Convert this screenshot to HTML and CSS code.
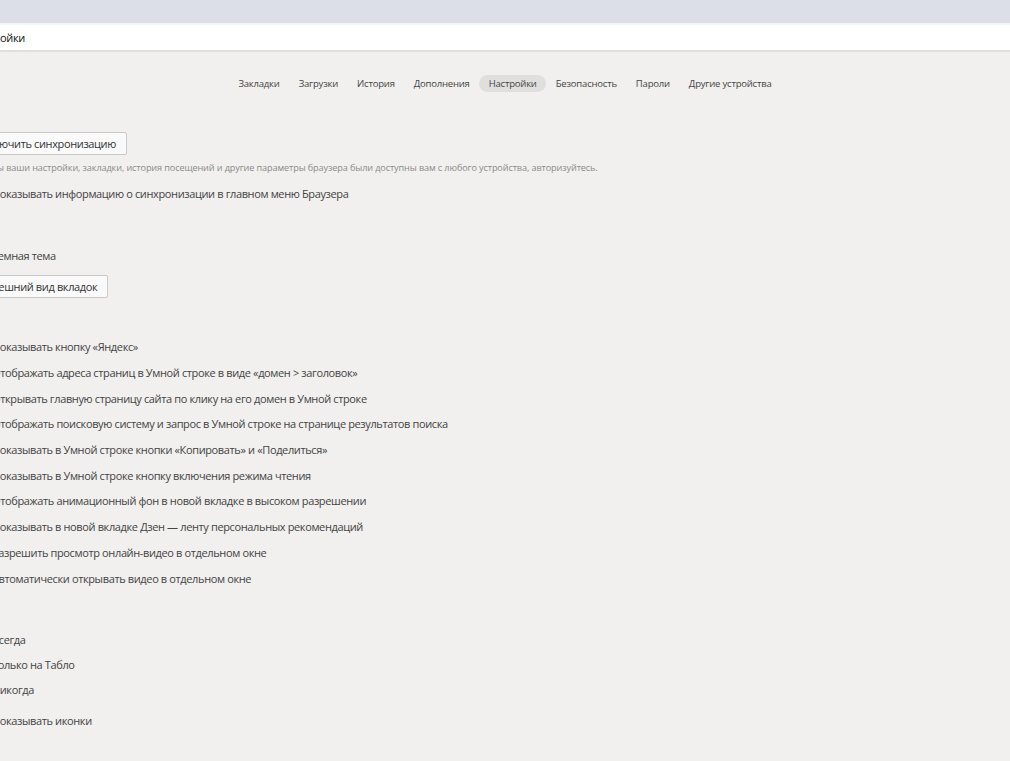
FILE: index.html
```html
<!DOCTYPE html>
<html lang="ru">
<head>
<meta charset="utf-8">
<title>Настройки</title>
<link rel="stylesheet" href="styles.css">
</head>
<body>
<div class="topbar"></div>
<div class="addressbar"><span class="addr-text">Настройки</span></div>
<nav class="tabs">
  <span class="tab">Закладки</span>
  <span class="tab">Загрузки</span>
  <span class="tab">История</span>
  <span class="tab">Дополнения</span>
  <span class="tab active">Настройки</span>
  <span class="tab">Безопасность</span>
  <span class="tab">Пароли</span>
  <span class="tab">Другие устройства</span>
</nav>
<main class="content">
  <button class="btn btn-sync">Включить синхронизацию</button>
  <p class="desc">Чтобы ваши настройки, закладки, история посещений и другие параметры браузера были доступны вам с любого устройства, авторизуйтесь.</p>
  <label class="row row-sync"><span class="box"></span><span>Показывать информацию о синхронизации в главном меню Браузера</span></label>

  <label class="row row-theme"><span class="box"></span><span>Темная тема</span></label>
  <button class="btn btn-tabs">Внешний вид вкладок</button>

  <div class="list">
    <label class="row"><span class="box"></span><span>Показывать кнопку «Яндекс»</span></label>
    <label class="row"><span class="box"></span><span>Отображать адреса страниц в Умной строке в виде «домен &gt; заголовок»</span></label>
    <label class="row"><span class="box"></span><span>Открывать главную страницу сайта по клику на его домен в Умной строке</span></label>
    <label class="row"><span class="box"></span><span>Отображать поисковую систему и запрос в Умной строке на странице результатов поиска</span></label>
    <label class="row"><span class="box"></span><span>Показывать в Умной строке кнопки «Копировать» и «Поделиться»</span></label>
    <label class="row"><span class="box"></span><span>Показывать в Умной строке кнопку включения режима чтения</span></label>
    <label class="row"><span class="box"></span><span>Отображать анимационный фон в новой вкладке в высоком разрешении</span></label>
    <label class="row"><span class="box"></span><span>Показывать в новой вкладке Дзен — ленту персональных рекомендаций</span></label>
    <label class="row"><span class="box"></span><span>Разрешить просмотр онлайн-видео в отдельном окне</span></label>
    <label class="row"><span class="box"></span><span>Автоматически открывать видео в отдельном окне</span></label>
  </div>

  <div class="radios">
    <label class="row"><span class="box round"></span><span>Всегда</span></label>
    <label class="row"><span class="box round"></span><span>Только на Табло</span></label>
    <label class="row"><span class="box round"></span><span>Никогда</span></label>
  </div>
  <label class="row row-icons"><span class="box"></span><span>Показывать иконки</span></label>
</main>
</body>
</html>
```

FILE: styles.css
```css
html, body {
  margin: 0;
  padding: 0;
}
body {
  background: #f1f0ee;
  font-family: "Open Sans", "Noto Sans", sans-serif;
  color: #434343;
  overflow: hidden;
  width: 1010px;
  height: 761px;
}
.topbar {
  height: 23px;
  background: #dcdfe7;
}
.addressbar {
  height: 25px;
  background: #ffffff;
  border-top: 2px solid #f4f5f7;
  border-bottom: 2px solid #dedede;
  display: flex;
  align-items: center;
  font-size: 11px;
  letter-spacing: -0.3px;
  color: #111;
}
.addr-text {
  margin-left: -30px;
}
.tabs {
  display: flex;
  justify-content: center;
  padding-top: 23px;
  font-size: 9.5px;
  letter-spacing: -0.2px;
  color: #444;
}
.tab {
  height: 17px;
  line-height: 17px;
  padding: 0 9.5px;
  border-radius: 9px;
}
.tab.active {
  background: #e0dfdd;
}
.content {
  margin-left: -8px;
  font-size: 11px;
  letter-spacing: -0.37px;
}
.btn {
  display: block;
  height: 23px;
  margin-left: -22px;
  padding: 0 10px;
  border: 1px solid #c9c9c9;
  border-radius: 2px;
  background: #fafafa;
  font: inherit;
  letter-spacing: inherit;
  color: #333;
}
.btn-sync {
  margin-top: 40px;
}
.desc {
  margin: 6px 0 0 -16px;
  font-size: 9.1px;
  letter-spacing: -0.1px;
  line-height: 14px;
  color: #8a8a8a;
  white-space: nowrap;
}
.row {
  display: flex;
  align-items: center;
  gap: 8px;
  height: 20px;
  margin-left: -22px;
  white-space: nowrap;
}
.box {
  width: 12px;
  height: 12px;
  border: 1px solid #aaa;
  background: #fff;
  flex: none;
}
.box.round {
  border-radius: 50%;
}
.row-sync {
  margin-top: 8px;
}
.row-theme {
  margin-top: 42px;
}
.btn-tabs {
  margin-top: 10px;
  margin-left: -18px;
}
.list {
  margin-top: 36px;
}
.list .row {
  height: 25.7px;
}
.radios {
  margin-top: 36.5px;
}
.radios .row {
  height: 25px;
}
.row-icons {
  margin-top: 8px;
}
```
